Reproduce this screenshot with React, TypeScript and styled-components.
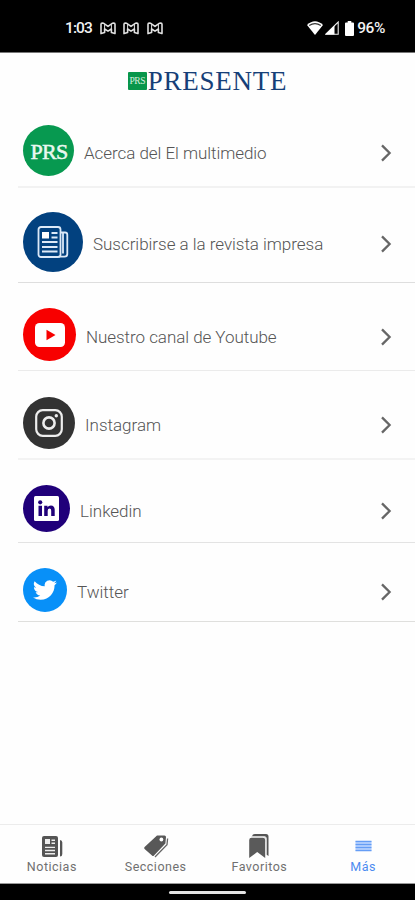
import React from "react";
import styled, { createGlobalStyle } from "styled-components";

const GlobalStyle = createGlobalStyle`
  * { box-sizing: border-box; }
  body { margin: 0; background: #fefefe; font-family: Roboto, sans-serif; }
`;

const Screen = styled.div`
  width: 415px;
  height: 900px;
  display: flex;
  flex-direction: column;
  background: #fefefe;
  overflow: hidden;
`;

const StatusBar = styled.header`
  height: 52px;
  flex: none;
  display: flex;
  align-items: center;
  justify-content: space-between;
  padding: 4px 30px 0 65px;
  background: #000;
  color: #f2f2f2;
`;

const StatusGroup = styled.div<{ $gap: number }>`
  display: flex;
  align-items: center;
  gap: ${(p) => p.$gap}px;
`;

const StatusText = styled.span<{ $spacing?: number }>`
  font: 500 15.5px/20px Roboto, sans-serif;
  letter-spacing: ${(p) => p.$spacing ?? 0}px;
`;

const Battery = styled.span`
  display: flex;
  margin: 0 1px 0 4px;
`;

const Brand = styled.div`
  height: 56px;
  flex: none;
  display: flex;
  align-items: center;
  justify-content: center;
  gap: 1px;
  border-top: 1px solid #777;
`;

const BrandBadge = styled.span`
  width: 19px;
  height: 18px;
  background: #08964b;
  border-radius: 1px;
  color: #d5eedf;
  font: 9.5px/18px "Liberation Serif", serif;
  letter-spacing: -0.5px;
  text-align: center;
`;

const BrandName = styled.span`
  font: 27px/28px "Liberation Serif", serif;
  letter-spacing: 0.75px;
  color: #163f78;
`;

const List = styled.main`
  flex: 1;
  padding-left: 18px;
`;

const Row = styled.a<{ $height: number; $gap: number; $line: number; $lineColor: string }>`
  height: ${(p) => p.$height}px;
  display: flex;
  align-items: flex-end;
  padding: 0 23px ${(p) => p.$gap}px 5px;
  border-bottom: ${(p) => p.$line}px solid ${(p) => p.$lineColor};
`;

const Disc = styled.span<{ $size: number; $color: string }>`
  width: ${(p) => p.$size}px;
  height: ${(p) => p.$size}px;
  flex: none;
  display: flex;
  align-items: center;
  justify-content: center;
  border-radius: 50%;
  background: ${(p) => p.$color};
`;

const DiscText = styled.span`
  font: 22px/24px "Liberation Serif", serif;
  letter-spacing: -0.7px;
  -webkit-text-stroke: 0.5px #eaf8f0;
  color: #eaf8f0;
  padding: 2px 0 0 1px;
`;

const RowBody = styled.span<{ $size: number }>`
  height: ${(p) => p.$size}px;
  flex: 1;
  display: flex;
  align-items: center;
  justify-content: space-between;
  padding: 4px 0 0 10px;
`;

const Label = styled.span<{ $spacing: number }>`
  font: 300 17px/24px Roboto, sans-serif;
  letter-spacing: ${(p) => p.$spacing}px;
  color: #555;
  white-space: nowrap;
`;

const TabBar = styled.nav`
  height: 60px;
  flex: none;
  display: grid;
  grid-template-columns: repeat(4, 1fr);
  border-top: 1px solid #ececec;
  border-bottom: 1px solid #999;
`;

const Tab = styled.a<{ $active?: boolean }>`
  display: flex;
  flex-direction: column;
  align-items: center;
  padding-top: 9px;
  gap: 1px;
  color: ${(p) => (p.$active ? "#4b8bf0" : "#707070")};
`;

const TabLabel = styled.span`
  font: 400 12.5px/16px Roboto, sans-serif;
  letter-spacing: 0.5px;
`;

const GestureBar = styled.footer`
  height: 16px;
  flex: none;
  display: flex;
  justify-content: center;
  padding-top: 7px;
  background: #000;
`;

const GestureHandle = styled.span`
  width: 77px;
  height: 3px;
  border-radius: 2px;
  background: #e4e4e4;
`;

const MailIcon = () => (
  <svg width="16" height="13" viewBox="0 0 16 13" fill="none" stroke="#e0e0e0" strokeWidth="1.6" strokeLinejoin="round">
    <path d="M1 2.2Q1 1 2.2 1L3.4 1.2 8 4.4 12.6 1.2 13.8 1Q15 1 15 2.2V11.6L11.4 10.6V7L8 9.2 4.6 7V10.6L1 11.6Z" />
    <path d="M4.6 2.2V7M11.4 2.2V7" strokeWidth="1" />
  </svg>
);

const WifiIcon = () => (
  <svg width="16" height="14" viewBox="0 0 16 14">
    <path d="M0 4Q8-3.5 16 4L8 14Z" fill="#fff" />
    <path d="M2.2 4.4Q8 .8 13.8 4.4" stroke="#333" strokeWidth="1.2" fill="none" />
  </svg>
);

const SignalIcon = () => (
  <svg width="14" height="14" viewBox="0 0 14 14">
    <path d="M.8 13.2 13.2 1v12.2Z" fill="none" stroke="#eee" strokeWidth="1.1" />
    <path d="M.5 13.5 9.5 4.5v9Z" fill="#fff" />
  </svg>
);

const BatteryIcon = () => (
  <svg width="9" height="15" viewBox="0 0 9 15" fill="#fff">
    <path d="M2.7 0h3.6v1.5H8Q9 1.5 9 2.5V14q0 1-1 1H1q-1 0-1-1V2.5q0-1 1-1h1.7Z" />
  </svg>
);

const Chevron = () => (
  <svg width="12" height="18" viewBox="0 0 12 18" fill="none" stroke="#666" strokeWidth="2.3">
    <path d="m2 1.4 7.6 7.6L2 16.6" />
  </svg>
);

const PaperIcon = () => (
  <svg width="32" height="32" viewBox="0 0 32 32" fill="none" stroke="#dce9f8" strokeWidth="1.8">
    <rect x="1.5" y="1" width="22" height="30" rx="2.5" />
    <path d="M24 6.5h4q2.3 0 2.3 2.3V28q0 2.7-2.8 2.7H21.5M26 7.5v20" />
    <path d="M14.5 7h6M14.5 11.5h6M5 16h15.5M5 21h15.5M5 25.5h15.5" />
    <path d="M5 6h7v6.5H5Z" fill="#fff" stroke="none" />
  </svg>
);

const YoutubeIcon = () => (
  <svg width="30" height="24" viewBox="0 0 30 24">
    <rect width="30" height="24" rx="4.5" fill="#fff" />
    <path d="m11.5 6.7 9 5.3-9 5.3Z" fill="#f80000" />
  </svg>
);

const InstagramIcon = () => (
  <svg width="28" height="28" viewBox="0 0 28 28" fill="none" stroke="#eee" strokeWidth="2.2">
    <rect x="1.2" y="1.2" width="25.6" height="25.6" rx="6.5" />
    <circle cx="14" cy="14" r="5.6" strokeWidth="2.6" />
    <circle cx="21.3" cy="6.7" r="1.7" fill="#eee" stroke="none" />
  </svg>
);

const LinkedinIcon = () => (
  <svg width="25" height="25" viewBox="0 0 25 25">
    <rect width="25" height="25" rx="1.5" fill="#fff" />
    <g fill="#20007a">
      <circle cx="6.2" cy="6.3" r="2.1" />
      <path d="M4.5 9.8h3.5V20H4.5ZM10.2 9.8h3.3v1.4q1-1.7 3.4-1.7 3.8 0 3.8 4.6V20h-3.5v-5.3q0-2.3-1.6-2.3-1.9 0-1.9 2.3V20h-3.5Z" />
    </g>
  </svg>
);

const TwitterIcon = () => (
  <svg width="24" height="20" viewBox="0 2 24 20" fill="#fff">
    <path d="M23.95 4.57a10 10 0 0 1-2.82.77 4.96 4.96 0 0 0 2.16-2.72c-.95.55-2 .96-3.13 1.19a4.92 4.92 0 0 0-8.38 4.48C7.69 8.1 4.07 6.13 1.64 3.16a4.93 4.93 0 0 0 1.52 6.57 4.9 4.9 0 0 1-2.23-.61v.06c0 2.38 1.7 4.37 3.95 4.83a5 5 0 0 1-2.21.08 4.94 4.94 0 0 0 4.6 3.42A9.87 9.87 0 0 1 0 19.54a14 14 0 0 0 7.55 2.21c9.05 0 14-7.5 14-13.98 0-.21 0-.42-.02-.63a10 10 0 0 0 2.42-2.57Z" />
  </svg>
);

const NewsTabIcon = () => (
  <svg width="24" height="24" viewBox="0 0 24 24">
    <rect x="2" y="2" width="16" height="21" rx="2" fill="#555" />
    <path d="M20 6q2.3 0 2.3 2.5V20q0 2.5-2.3 2.5Z" fill="#555" />
    <path d="M5 5h5v5H5ZM11.5 5.5H15V7h-3.5ZM11.5 8.5H15V10h-3.5ZM5 12.7h10v1.4H5ZM5 15.8h10v1.4H5ZM5 19h10v1.4H5Z" fill="#eee" />
  </svg>
);

const TagsTabIcon = () => (
  <svg width="26" height="24" viewBox="0 0 26 24">
    <path d="M14 1.5h7.5q1.5 0 1.5 1.5l-.6 6.6L11 21.5q-1 1-2 0L1.6 15q-1-1 0-2Z" fill="#585858" />
    <circle cx="18.4" cy="5.5" r="1.9" fill="#fff" />
    <path d="M24.6 4.5 24 10.8 12 23" fill="none" stroke="#666" strokeWidth="1.3" />
  </svg>
);

const BookmarksTabIcon = () => (
  <svg width="24" height="24" viewBox="0 0 24 24">
    <path d="M5 2.3Q5.5 0 7.8 0H19q2.5 0 2.5 2.5V22l-1.8-1.2V5q0-2.7-2.5-2.7Z" fill="#555" />
    <path d="M4.7 3.7h11q2.5 0 2.5 2.2V24L10.2 18 2.2 24V5.9q0-2.2 2.5-2.2Z" fill="#5a5a5a" />
    <path d="M4 3h13q2 0 2 2v3" fill="none" stroke="#ccc" strokeWidth=".7" />
  </svg>
);

const MenuTabIcon = () => (
  <svg width="24" height="24" viewBox="0 0 24 24" stroke="#659df5" strokeWidth="1.5">
    <rect x="4.5" y="7" width="16" height="10" fill="#c3daff" stroke="none" />
    <path d="M4.5 7.5h16M4.5 10.5h16M4.5 13.5h16M4.5 16.5h16" />
  </svg>
);

const links = [
  { label: "Acerca del El multimedio", size: 51, height: 80, gap: 10, line: 2, lineColor: "#f2f2f2", color: "#079950", icon: <DiscText>PRS</DiscText>, spacing: -0.05 },
  { label: "Suscribirse a la revista impresa", size: 60, height: 95, gap: 10, line: 1, lineColor: "#dedede", color: "#02417f", icon: <PaperIcon />, spacing: -0.03 },
  { label: "Nuestro canal de Youtube", size: 53, height: 88, gap: 9, line: 1, lineColor: "#ebebeb", color: "#f80000", icon: <YoutubeIcon />, spacing: -0.05 },
  { label: "Instagram", size: 52, height: 89, gap: 9, line: 2, lineColor: "#f3f3f3", color: "#333", icon: <InstagramIcon />, spacing: 0 },
  { label: "Linkedin", size: 47, height: 83, gap: 10, line: 1, lineColor: "#e3e3e3", color: "#20007a", icon: <LinkedinIcon />, spacing: 0 },
  { label: "Twitter", size: 44, height: 79, gap: 9, line: 1, lineColor: "#dfdfdd", color: "#0890f8", icon: <TwitterIcon />, spacing: 0 },
];

const tabs = [
  { label: "Noticias", icon: <NewsTabIcon /> },
  { label: "Secciones", icon: <TagsTabIcon /> },
  { label: "Favoritos", icon: <BookmarksTabIcon /> },
  { label: "Más", icon: <MenuTabIcon />, active: true },
];

export default function App() {
  return (
    <>
      <GlobalStyle />
      <Screen>
        <StatusBar>
          <StatusGroup $gap={7.7}>
            <StatusText $spacing={-0.9}>1:03</StatusText>
            <MailIcon />
            <MailIcon />
            <MailIcon />
          </StatusGroup>
          <StatusGroup $gap={2}>
            <WifiIcon />
            <SignalIcon />
            <Battery>
              <BatteryIcon />
            </Battery>
            <StatusText $spacing={-0.4}>96%</StatusText>
          </StatusGroup>
        </StatusBar>
        <Brand>
          <BrandBadge>PRS</BrandBadge>
          <BrandName>PRESENTE</BrandName>
        </Brand>
        <List>
          {links.map((l) => (
            <Row key={l.label} $height={l.height} $gap={l.gap} $line={l.line} $lineColor={l.lineColor}>
              <Disc $size={l.size} $color={l.color}>{l.icon}</Disc>
              <RowBody $size={l.size}>
                <Label $spacing={l.spacing}>{l.label}</Label>
                <Chevron />
              </RowBody>
            </Row>
          ))}
        </List>
        <TabBar>
          {tabs.map((t) => (
            <Tab key={t.label} $active={t.active}>
              {t.icon}
              <TabLabel>{t.label}</TabLabel>
            </Tab>
          ))}
        </TabBar>
        <GestureBar>
          <GestureHandle />
        </GestureBar>
      </Screen>
    </>
  );
}
